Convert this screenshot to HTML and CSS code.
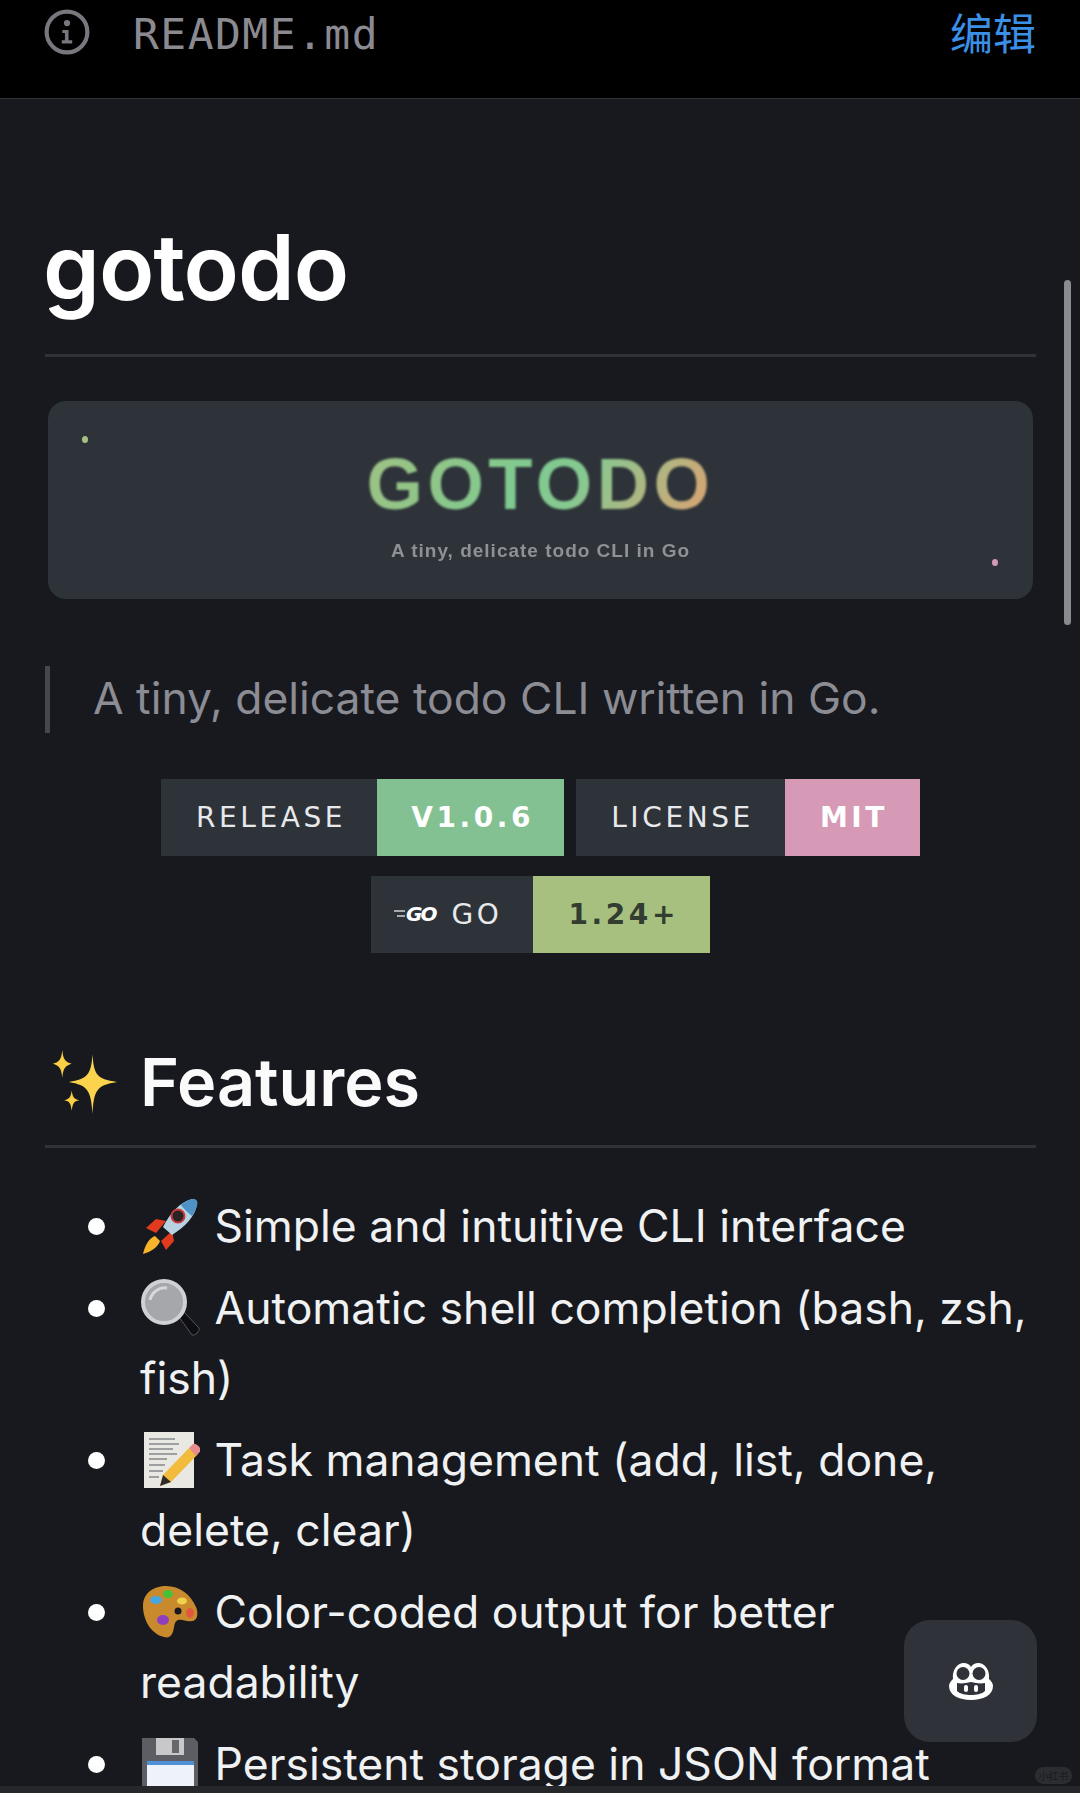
FILE: index.html
```html
<!DOCTYPE html>
<html lang="en">
<head>
<meta charset="utf-8">
<title>README.md</title>
<link rel="stylesheet" href="styles.css">
</head>
<body>
<div class="page">
  <header class="topbar">
    <div class="file">
      <svg class="info" viewBox="0 0 44 44"><circle cx="22" cy="22" r="19.5" fill="none" stroke="#77777d" stroke-width="4"/><circle cx="22" cy="13.5" r="3" fill="#77777d"/><path d="M17.5 20h6v10h3.500v3h-10v-3h3v-7h-2.500z" fill="#77777d"/></svg>
      <span class="filename">README.md</span>
    </div>
    <a class="edit">编辑</a>
  </header>
  <main class="doc">
    <h1 class="title">gotodo</h1>
    <div class="banner">
      <span class="dot dot-green"></span>
      <span class="dot dot-pink"></span>
      <div class="banner-title">GOTODO</div>
      <div class="banner-sub">A tiny, delicate todo CLI in Go</div>
    </div>
    <blockquote class="quote">A tiny, delicate todo CLI written in Go.</blockquote>
    <div class="badges">
      <div class="badge"><span class="b-label">RELEASE</span><span class="b-value v-green">V1.0.6</span></div>
      <div class="badge"><span class="b-label">LICENSE</span><span class="b-value v-pink">MIT</span></div>
      <div class="badge"><span class="b-label b-label-go"><span class="golang"><i class="speed"></i><i class="speed speed-low"></i>GO</span>GO</span><span class="b-value v-olive">1.24+</span></div>
    </div>
    <h2 class="section">
      <svg class="spark" viewBox="0 0 72 60" preserveAspectRatio="none"><path d="M45 4c1.500 19 4 23 26 26-22 3-24.500 8-26 30-1.500-22-5-27-25-30 20-3 23.500-7 25-26z" fill="#fcd34d"/><path d="M13 0c1 9 3 11 10 13-7 2-9 4-10 13-1-9-3-11-10-13 7-2 9-4 10-13z" fill="#fbcf45"/><path d="M23 38c1 6 2 8 8 9-6 1-7 3-8 10-1-7-2-9-8-10 6-1 7-3 8-9z" fill="#fbcf45"/></svg>
      <span>Features</span>
    </h2>
    <ul class="features">
      <li><svg class="emoji" viewBox="0 0 60 60"><path d="M6 32l10-9 10 2-10 12z" fill="#e23a1f"/><path d="M26 54l8-9-2-10-11 10z" fill="#e23a1f"/><path d="M3 58c2-9 6-16 12-18l5 5c-2 6-9 11-17 13z" fill="#f7b32b"/><path d="M52 3c4 0 6 2 5 6-2 11-12 22-25 30l-9-8C30 17 40 6 52 3z" fill="#b7d3e3"/><path d="M52 3c4 0 6 2 5 6-1 4-3 8-5 11-3-2-9-8-11-11 3-3 7-5 11-6z" fill="#4f93c6"/><circle cx="38" cy="20" r="6.500" fill="#2a2225" stroke="#c73a3a" stroke-width="2"/></svg> Simple and intuitive CLI interface</li>
      <li><svg class="emoji" viewBox="0 0 60 60"><path d="M39 39l5-5 15 16c1 3-4 8-7 7z" fill="#0e0e12" stroke="#55565c" stroke-width="1"/><circle cx="24" cy="24" r="21" fill="#a5a7ab" stroke="#d0d1d4" stroke-width="4"/><path d="M10 22c2-8 9-13 17-12" stroke="#d8d9dc" stroke-width="3" fill="none"/></svg> Automatic shell completion (bash, zsh, fish)</li>
      <li><svg class="emoji" viewBox="0 0 60 60"><rect x="4" y="2" width="50" height="56" fill="#e9e8e3"/><path d="M9 9h26M9 14h30M9 19h24M9 24h28M9 29h18M9 35h16M9 41h14M9 47h10" stroke="#85868a" stroke-width="1.500"/><path d="M49 18l8 7-26 27-11 4 3-11z" fill="#f3bb3c"/><path d="M49 18l4-4c2-1 5 1 7 4 1 2 0 4-2 6l-2 2z" fill="#e88b8c"/><path d="M23 45l8 7-11 4z" fill="#2e2c2a"/></svg> Task management (add, list, done, delete, clear)</li>
      <li><svg class="emoji" viewBox="0 0 60 60"><path d="M3 24C3 10 15 4 26 4c14 0 25 9 30 21 3 7 1 14-4 14-6 1-9-2-14-1-5 2-3 9-6 14-2 3-4 4-8 3C11 52 3 38 3 24z" fill="#c98a2d"/><ellipse cx="16" cy="18" rx="6" ry="4" fill="#46a7e0"/><ellipse cx="28" cy="12" rx="5" ry="4" fill="#42c335"/><ellipse cx="42" cy="19" rx="5" ry="3.500" fill="#efd24a"/><ellipse cx="23" cy="38" rx="6" ry="5" fill="#8e3fc0"/><circle cx="38" cy="29" r="3.500" fill="#17191e"/><ellipse cx="50" cy="31" rx="4" ry="5" fill="#e2583e"/></svg> Color-coded output for better readability</li>
      <li><svg class="emoji" viewBox="0 0 60 60"><path d="M2 4h52l4 4v50H2z" fill="#5d5e63"/><rect x="16" y="4" width="28" height="17" fill="#c8c8ca"/><rect x="32" y="6" width="7" height="13" fill="#66676b"/><rect x="7" y="27" width="47" height="31" fill="#eef3fb"/><rect x="7" y="27" width="47" height="4" fill="#4e8fd6"/></svg> Persistent storage in JSON format</li>
    </ul>
  </main>
  <div class="scrollbar"></div>
  <button class="fab" aria-label="Copilot">
    <svg viewBox="0 0 48 40"><path d="M2 25c0-3 2-5 4-7C5 9 10 2 17 2c3 0 5 1 7 4 2-3 4-4 7-4 7 0 12 7 11 16 2 2 4 4 4 7 0 9-10 14-22 14S2 34 2 25z" fill="#fff"/><circle cx="16" cy="12.500" r="6.500" fill="#2f3239"/><circle cx="32" cy="12.500" r="6.500" fill="#2f3239"/><path d="M10 22c5 1 9 0 14-1 5 1 9 2 14 1v8c-3 3-9 4-14 4s-11-1-14-4z" fill="#2f3239"/><rect x="17" y="24" width="4" height="7" rx="2" fill="#fff"/><rect x="27" y="24" width="4" height="7" rx="2" fill="#fff"/></svg>
  </button>
  <span class="mark">小红书</span>
  <div class="bottombar"></div>
</div>
</body>
</html>
```
FILE: styles.css
```css
* { box-sizing: border-box; }
html, body { margin: 0; padding: 0; background: #17191e; }
.page {
  position: relative;
  width: 1080px;
  height: 1793px;
  overflow: hidden;
  background: #17191e;
  color: #f2f3f5;
  font-family: Inter, "Noto Sans CJK SC", sans-serif;
}
.topbar {
  height: 99px;
  padding: 6px 44px 0 44px;
  background: #000;
  border-bottom: 1px solid #303236;
  display: flex;
  justify-content: space-between;
  align-items: flex-start;
}
.file { display: flex; align-items: center; gap: 43px; height: 52px; }
.info { width: 46px; height: 46px; }
.filename {
  font-family: "DejaVu Sans Mono", monospace;
  font-size: 43px;
  line-height: 52px;
  padding-top: 4px;
  color: #8a8a90;
  letter-spacing: 1.450px;
}
.edit { font-family: "Noto Sans CJK SC", sans-serif; font-size: 43px; color: #3b8fe6; line-height: 50px; }
.doc { padding: 0 44px 0 45px; }
.title {
  margin: 113px 0 0;
  font-size: 91px;
  line-height: 110px;
  font-weight: 600;
  color: #fff;
  letter-spacing: -1px;
  text-indent: -2px;
  padding-bottom: 32px;
  border-bottom: 3px solid #303238;
}
.banner {
  position: relative;
  margin: 44px 0 0 3px;
  height: 198px;
  width: 985px;
  border-radius: 18px;
  background: #2e333a;
  display: flex;
  flex-direction: column;
  align-items: center;
  font-family: "Liberation Sans", sans-serif;
}
.banner-title {
  margin-top: 48px;
  font-size: 72.500px;
  line-height: 70px;
  font-weight: 700;
  letter-spacing: 4.500px;
  background: linear-gradient(120deg, #9fc283 0%, #7fca90 45%, #86c990 60%, #e0a070 100%);
  -webkit-background-clip: text;
  background-clip: text;
  color: transparent;
  filter: blur(.8px);
}
.banner-sub {
  margin-top: 21px;
  font-size: 19px;
  color: #8f9295;
  letter-spacing: 1px;
  font-weight: 700;
  filter: blur(.6px);
}
.dot { position: absolute; width: 6px; height: 7px; border-radius: 50%; }
.dot-green { left: 34px; top: 35px; background: #a6c282; }
.dot-pink { left: 944px; top: 158px; background: #d49ab8; }
.quote {
  margin: 67px 0 0;
  height: 67px;
  padding-left: 43px;
  border-left: 5px solid #45474c;
  font-size: 44.400px;
  line-height: 64px;
  color: #8b8c94;
  font-weight: 400;
}
.badges {
  margin-top: 46px;
  display: flex;
  flex-wrap: wrap;
  justify-content: center;
  gap: 20px 12px;
  padding: 0 60px;
}
.badge {
  display: flex;
  height: 77px;
  font-family: "DejaVu Sans", sans-serif;
  font-size: 28px;
  line-height: 77px;
  letter-spacing: 3.600px;
}
.b-label { background: #2e333a; color: #e8e9ea; padding: 0 31px 0 35px; display: flex; align-items: center; }
.b-label-go { padding-left: 23px; }
.b-value { font-weight: 700; color: #fff; padding: 0 30px 0 34px; }
.v-green { background: #83c092; }
.v-pink { background: #d699b6; padding: 0 32px 0 35px; }
.v-olive { background: #a7c080; color: #323c30; padding: 0 31px 0 35px; }
.golang {
  position: relative;
  font-style: italic;
  font-weight: 800;
  font-size: 20px;
  letter-spacing: -2px;
  margin-right: 16px;
  padding-left: 12px;
  color: #fff;
}
.speed {
  position: absolute;
  left: 0;
  top: 34px;
  width: 11px;
  height: 2px;
  background: #aaa;
}
.speed-low { top: 39px; left: 3px; width: 8px; }
.section {
  margin: 85px 0 0;
  height: 110px;
  display: flex;
  align-items: center;
  gap: 22px;
  font-size: 66.500px;
  font-weight: 600;
  color: #fafafa;
  border-bottom: 3px solid #303238;
  padding-bottom: 20px;
}
.spark { width: 68px; height: 64px; flex: none; margin-left: 5px; }
.features {
  margin: 0;
  padding: 43px 0 0 95px;
  list-style: none;
  font-size: 44.500px;
  line-height: 70px;
  color: #f0f1f3;
}
.features li { position: relative; margin-bottom: 12px; }
.features li::before {
  content: "";
  position: absolute;
  left: -52px;
  top: 27px;
  width: 17px;
  height: 17px;
  border-radius: 50%;
  background: #fff;
}
.emoji { width: 60px; height: 60px; vertical-align: -14px; margin-right: 2px; }
.scrollbar {
  position: absolute;
  right: 9px;
  top: 280px;
  width: 7px;
  height: 345px;
  border-radius: 4px;
  background: #8a8b8f;
}
.fab {
  position: absolute;
  left: 904px;
  top: 1620px;
  width: 133px;
  height: 122px;
  border: 0;
  border-radius: 26px;
  background: #2f3239;
  display: flex;
  align-items: center;
  justify-content: center;
}
.fab svg { width: 48px; height: 40px; flex: none; }
.mark {
  position: absolute;
  left: 1035px;
  top: 1767px;
  width: 37px;
  height: 17px;
  border-radius: 9px;
  background: #2b2d31;
  color: #1a1b1e;
  font-size: 10px;
  line-height: 17px;
  text-align: center;
  font-family: "Noto Sans CJK SC", sans-serif;
}
.bottombar {
  position: absolute;
  left: 0;
  right: 0;
  bottom: 0;
  height: 7px;
  background: #25272b;
}
```
